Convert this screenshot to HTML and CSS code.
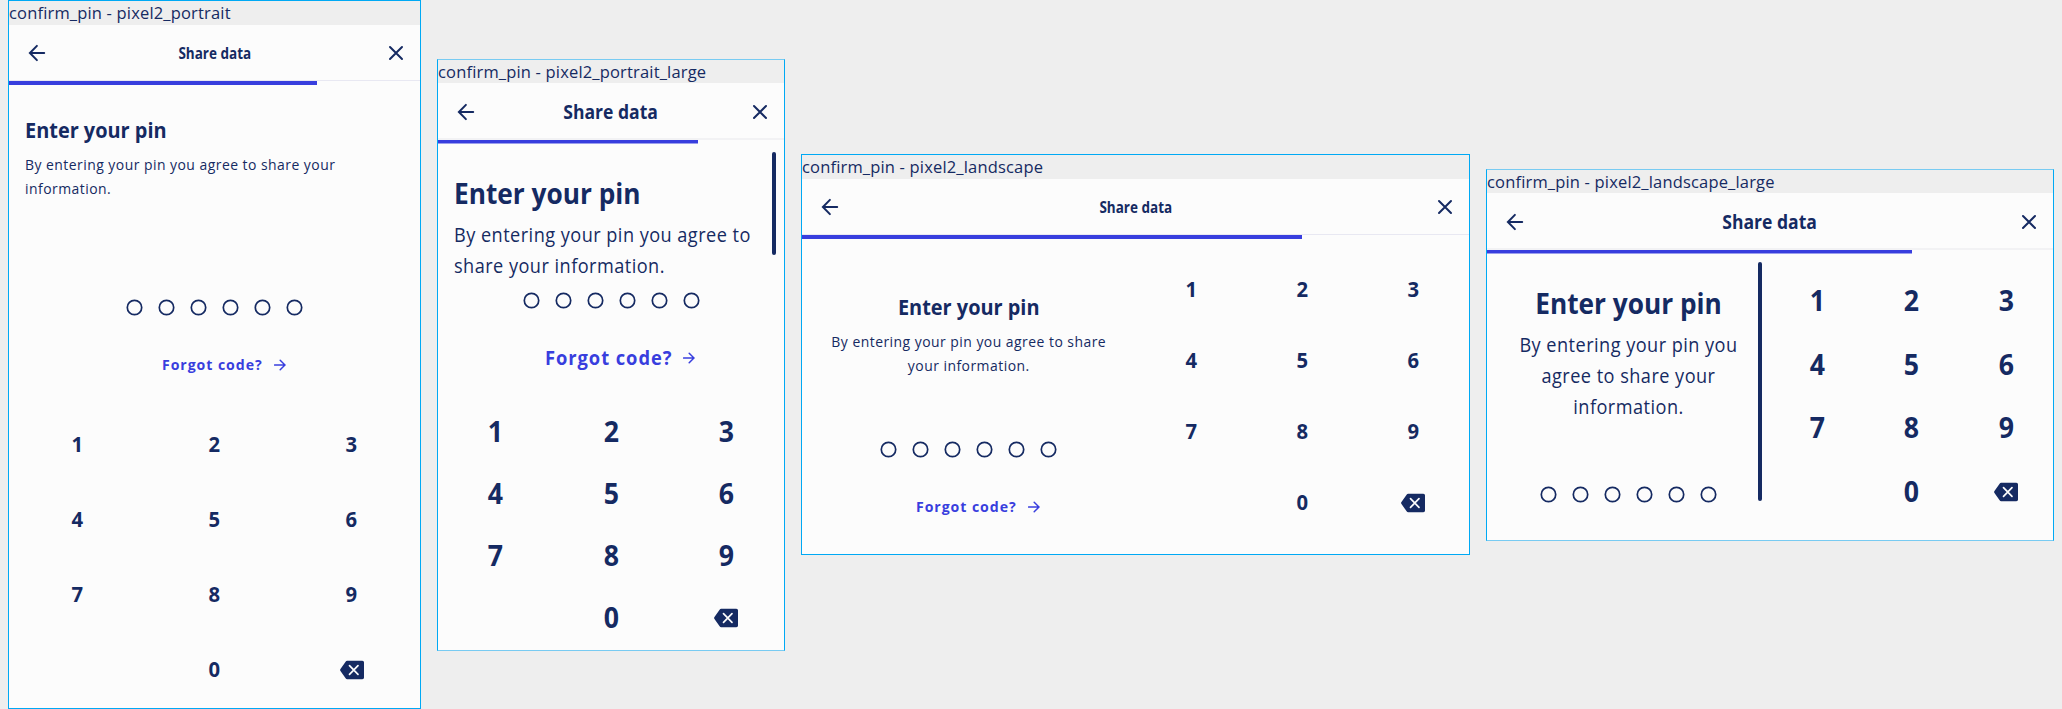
FILE: index.html
```html
<!DOCTYPE html>
<html lang="en">
<head>
<meta charset="utf-8">
<title>confirm_pin</title>
<link rel="stylesheet" href="styles.css">
</head>
<body>
<svg class="defs" aria-hidden="true">
  <symbol id="back" viewBox="0 0 24 24"><path class="line" d="M19.2 12H5.6M11.9 4.9 4.9 12l7 7.1"/></symbol>
  <symbol id="close" viewBox="0 0 24 24"><path class="line" d="M6 6l12 12M18 6 6 18"/></symbol>
  <symbol id="next" viewBox="0 0 12 12"><path class="thin" d="M.6 6h10M6.2 1.2 11 6l-4.800 4.800"/></symbol>
  <symbol id="erase" viewBox="0 0 24 24"><path fill="currentColor" d="M22.300 2.800H7.200c-.7 0-1.200.3-1.600.9L.3 11.300c-.3.4-.3 1 0 1.400l5.300 7.600c.4.600.9.900 1.600.9h15.100c1 0 1.700-.7 1.700-1.700v-15c0-1-.7-1.700-1.700-1.700z"/><path class="cross" d="M9.500 7.700l8.500 8.600M18 7.700l-8.500 8.600"/></symbol>
  <symbol id="dots" viewBox="0 0 177 17"><g class="ring"><circle cx="8.500" cy="8.500" r="7.200"/><circle cx="40.500" cy="8.500" r="7.200"/><circle cx="72.500" cy="8.500" r="7.200"/><circle cx="104.500" cy="8.500" r="7.200"/><circle cx="136.500" cy="8.500" r="7.200"/><circle cx="168.500" cy="8.500" r="7.200"/></g></symbol>
</svg>
<main class="board">
  <section class="frame portrait">
    <div class="label"><span>confirm_pin - pixel2_portrait</span></div>
    <div class="screen">
      <header class="bar"><svg class="icon"><use href="#back"/></svg><h1 class="title">Share data</h1><svg class="icon"><use href="#close"/></svg></header>
      <div class="progress"><div class="fill"></div></div>
      <div class="content">
        <div class="side">
          <div class="intro"><h2 class="heading">Enter your pin</h2><p class="text">By entering your pin you agree to share your<br>information.</p></div>
          <svg class="dots"><use href="#dots"/></svg>
          <a class="forgot"><span>Forgot code?</span><svg class="next"><use href="#next"/></svg></a>
        </div>
        <div class="keys"><b>1</b><b>2</b><b>3</b><b>4</b><b>5</b><b>6</b><b>7</b><b>8</b><b>9</b><i></i><b>0</b><svg class="icon"><use href="#erase"/></svg></div>
      </div>
    </div>
  </section>
  <section class="frame portrait large">
    <div class="label"><span>confirm_pin - pixel2_portrait_large</span></div>
    <div class="screen">
      <header class="bar"><svg class="icon"><use href="#back"/></svg><h1 class="title">Share data</h1><svg class="icon"><use href="#close"/></svg></header>
      <div class="progress"><div class="fill"></div></div>
      <div class="content">
        <div class="side">
          <div class="intro"><h2 class="heading">Enter your pin</h2><p class="text">By entering your pin you agree to<br>share your information.</p></div>
          <svg class="dots"><use href="#dots"/></svg>
          <a class="forgot"><span>Forgot code?</span><svg class="next"><use href="#next"/></svg></a>
          <div class="scroll"></div>
        </div>
        <div class="keys"><b>1</b><b>2</b><b>3</b><b>4</b><b>5</b><b>6</b><b>7</b><b>8</b><b>9</b><i></i><b>0</b><svg class="icon"><use href="#erase"/></svg></div>
      </div>
    </div>
  </section>
  <section class="frame landscape">
    <div class="label"><span>confirm_pin - pixel2_landscape</span></div>
    <div class="screen">
      <header class="bar"><svg class="icon"><use href="#back"/></svg><h1 class="title">Share data</h1><svg class="icon"><use href="#close"/></svg></header>
      <div class="progress"><div class="fill"></div></div>
      <div class="content">
        <div class="side">
          <div class="intro"><h2 class="heading">Enter your pin</h2><p class="text">By entering your pin you agree to share<br>your information.</p></div>
          <svg class="dots"><use href="#dots"/></svg>
          <a class="forgot"><span>Forgot code?</span><svg class="next"><use href="#next"/></svg></a>
        </div>
        <div class="keys"><b>1</b><b>2</b><b>3</b><b>4</b><b>5</b><b>6</b><b>7</b><b>8</b><b>9</b><i></i><b>0</b><svg class="icon"><use href="#erase"/></svg></div>
      </div>
    </div>
  </section>
  <section class="frame landscape large">
    <div class="label"><span>confirm_pin - pixel2_landscape_large</span></div>
    <div class="screen">
      <header class="bar"><svg class="icon"><use href="#back"/></svg><h1 class="title">Share data</h1><svg class="icon"><use href="#close"/></svg></header>
      <div class="progress"><div class="fill"></div></div>
      <div class="content">
        <div class="side">
          <div class="intro"><h2 class="heading">Enter your pin</h2><p class="text">By entering your pin you<br>agree to share your<br>information.</p></div>
          <svg class="dots"><use href="#dots"/></svg>
          <div class="scroll"></div>
        </div>
        <div class="keys"><b>1</b><b>2</b><b>3</b><b>4</b><b>5</b><b>6</b><b>7</b><b>8</b><b>9</b><i></i><b>0</b><svg class="icon"><use href="#erase"/></svg></div>
      </div>
    </div>
  </section>
</main>
</body>
</html>
```
FILE: styles.css
```css
* { box-sizing: border-box; margin: 0; padding: 0; }
body {
  height: 709px;
  overflow: hidden;
  background: #eee;
  color: #152a62;
  font-family: "Open Sans", "Noto Sans", sans-serif;
}
.defs { position: absolute; width: 0; height: 0; }
.line, .thin, .cross, .ring { fill: none; stroke: currentColor; stroke-width: 2; stroke-linecap: round; }
.thin { stroke-width: 1.5; }
.cross { stroke: #fcfcfc; stroke-width: 1.7; }
.ring { stroke-width: 1.7; }

.board { display: flex; align-items: flex-start; gap: 16px; padding-left: 8px; }
.frame { flex: none; border: 1px solid #00a9f4; white-space: nowrap; }
.portrait { width: 413px; height: 709px; }
.portrait.large { width: 348px; height: 592px; margin-top: 59px; }
.landscape { width: 669px; height: 401px; margin-top: 154px; }
.landscape.large { width: 568px; height: 372px; margin-top: 169px; }
.large { border-top-color: #78cbf2; border-bottom-color: #78cbf2; }

.label { height: 24px; }
.label span { display: block; height: 24px; font-size: 16.5px; line-height: 24px; letter-spacing: .17px; }
.large .label { height: 23px; }
.screen { background: #fcfcfc; height: calc(100% - 24px); }
.large .screen { height: calc(100% - 23px); }

.bar { display: flex; align-items: center; justify-content: space-between; height: 56px; padding: 1px 12px 0 16px; border-bottom: 1px solid #e8e8f2; }
.large .bar { height: 57px; padding-top: 3px; border-bottom: 2px solid #f2f2f4; }
.icon { width: 24px; height: 24px; display: block; }
.title { font-size: 15.5px; line-height: 24px; font-weight: 700; margin-right: 4px; transform: scaleX(.87); }
.large .title { font-size: 19.500px; transform: scaleX(.9); }
.progress { height: 4px; }
.fill { width: 75%; height: 4px; background: #383ede; }
.large .fill { border-bottom: 1px solid #9b9eee; }

.content { display: flex; }
.portrait .content { flex-direction: column; }
.side { position: relative; display: flex; flex-direction: column; align-items: center; }
.landscape .side, .landscape .keys { width: 50%; }
.intro { align-self: stretch; padding: 30px 0 0 16px; height: 214px; }
.heading { font-size: 22px; line-height: 28px; font-weight: 700; transform: scaleX(.905); transform-origin: left; }
.text { margin-top: 9px; font-size: 15px; line-height: 24px; letter-spacing: .5px; transform: scaleX(.93); transform-origin: left; }
.dots { width: 177px; height: 17px; flex: none; }
.forgot { display: flex; align-self: stretch; align-items: center; height: 24px; margin-top: 36px; padding-left: 153px; color: #383ede; font-weight: 700; font-size: 15px; letter-spacing: 1px; }
.forgot span { width: 112px; transform: scaleX(.94); transform-origin: left; }
.next { width: 12px; height: 12px; margin-top: 2px; }
.keys { display: grid; grid-template-columns: repeat(3, 1fr); grid-auto-rows: 75px; place-items: center; font-size: 22px; line-height: 30px; margin-top: 31px; }
.keys b { padding-bottom: 3px; transform: scaleX(.92); }
.scroll { position: absolute; width: 4px; border-radius: 2px; background: #152a62; }

.large .heading { font-size: 29px; line-height: 36px; }
.large .text { font-size: 19.500px; line-height: 31px; margin-top: 8px; }
.large .keys { font-size: 29px; line-height: 40px; }
.portrait.large .intro { height: 148px; padding-top: 31px; }
.portrait.large .forgot { margin-top: 36px; padding-left: 107px; font-size: 19.500px; }
.portrait.large .forgot span { width: 138px; }
.portrait.large .keys { grid-auto-rows: 62px; margin-top: 32px; }
.portrait.large .scroll { left: 334px; top: 8px; height: 103px; }

.landscape .heading, .landscape .text { transform-origin: center; }
.landscape .intro { text-align: center; padding: 53px 0 0; height: 202px; }
.landscape .forgot { padding-left: 114px; }
.landscape .keys { grid-auto-rows: 71px; margin-top: 15px; }
.landscape.large .intro { height: 232px; padding-top: 31px; }
.landscape.large .keys { grid-auto-rows: 63.600px; margin-top: 15px; }
.landscape.large .keys b { padding-bottom: 1px; }
.landscape.large .scroll { left: 271px; top: 8px; height: 239px; }
```
